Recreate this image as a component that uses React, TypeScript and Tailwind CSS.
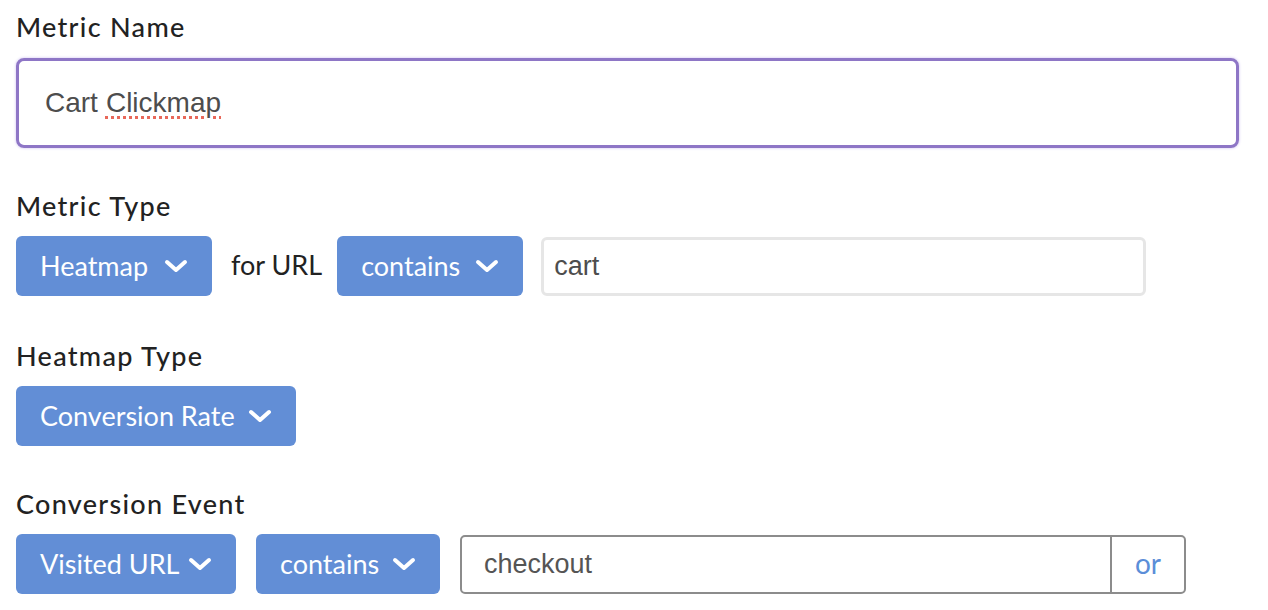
import { useState } from 'react';

function Chevron() {
    return (
        <svg width="24" height="14" viewBox="0 0 24 14" fill="none" className="shrink-0">
            <polyline points="3,3 12,11 21,3" stroke="white" strokeWidth="4" strokeLinecap="round" strokeLinejoin="round" />
        </svg>
    );
}

function DropButton({ label, className = '' }: { label: string; className?: string }) {
    return (
        <button className={`h-[60px] flex items-center justify-between px-6 rounded-md bg-[#628ed6] text-white text-[27px] font-['Lato',sans-serif] leading-none ${className}`}>
            <span className="pb-[2px]">{label}</span>
            <Chevron />
        </button>
    );
}

function Label({ children, className = '' }: { children: string; className?: string }) {
    return (
        <div className={`text-[27px] leading-[32px] font-medium tracking-[1.3px] text-[#222] font-['Lato',sans-serif] ${className}`}>
            {children}
        </div>
    );
}

export default function App() {
    const [cartUrl, setCartUrl] = useState('cart');
    const [eventUrl, setEventUrl] = useState('checkout');

    return (
        <div className="min-h-[610px] bg-white pl-4 pt-[11px] font-['Liberation_Sans',Arial,sans-serif]">
            {/* Metric name */}
            <Label className="mb-[15px]">Metric Name</Label>
            <div className="w-[1223px] h-[90px] rounded-lg border-[3px] border-[#8e76c6] shadow-[0_0_3px_#cbbdf0] flex items-center pl-[26px] text-[28px] text-[#4d4d4d]">
                Cart{' '}
                <span className="ml-[8px] underline decoration-dotted decoration-[3px] decoration-[#e8685a] underline-offset-[4px]">Clickmap</span>
            </div>

            {/* Metric type */}
            <Label className="mt-[42px] mb-[14px]">Metric Type</Label>
            <div className="flex items-center">
                <DropButton label="Heatmap" className="w-[196px]" />
                <span className="ml-[19px] mr-[15px] text-[27px] text-[#222] font-['Lato',sans-serif] pb-[2px]">for URL</span>
                <DropButton label="contains" className="w-[186px]" />
                <input
                    value={cartUrl}
                    onChange={e => setCartUrl(e.target.value)}
                    className="ml-[18px] w-[605px] h-[59px] rounded-md border-[3px] border-[#e6e6e6] px-[10px] text-[27px] text-[#4d4d4d] outline-none"
                />
            </div>

            {/* Heatmap type */}
            <Label className="mt-[44px] mb-[14px]">Heatmap Type</Label>
            <div className="flex">
                <DropButton label="Conversion Rate" className="w-[280px]" />
            </div>

            {/* Conversion event */}
            <Label className="mt-[42px] mb-[14px]">Conversion Event</Label>
            <div className="flex items-center gap-5">
                <DropButton label="Visited URL" className="w-[220px]" />
                <DropButton label="contains" className="w-[184px]" />
                <div className="w-[726px] h-[59px] rounded-[5px] border-2 border-[#8c8c8c] flex overflow-hidden">
                    <input
                        value={eventUrl}
                        onChange={e => setEventUrl(e.target.value)}
                        className="flex-1 min-w-0 px-[22px] text-[27px] text-[#555] outline-none"
                    />
                    <div className="w-[74px] border-l-2 border-[#8c8c8c] flex items-center justify-center text-[28px] text-[#5b8ed8] font-['Lato',sans-serif] pb-[3px]">
                        or
                    </div>
                </div>
            </div>
        </div>
    );
}
